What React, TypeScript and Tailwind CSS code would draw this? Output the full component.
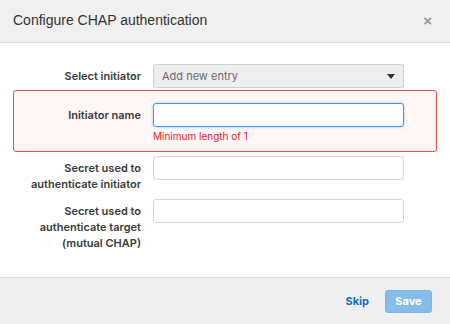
export default function App() {
  const label = 'w-[128px] shrink-0 pr-[1px] text-right text-[11px] font-semibold leading-[16px] text-[#3a3a3a]';
  const input = 'h-[24px] w-[251px] shrink-0 rounded-[3px] border border-[#d4d4d4] bg-white';

  return (
    <div className="flex h-[324px] w-[450px] flex-col bg-white font-['Inter',sans-serif]">
      <header className="flex h-[43px] shrink-0 items-center justify-between border-b border-[#dcdcdc] bg-[#f0f0f0] pl-[13px] pr-[18px]">
        <h1 className="pb-[1px] font-['Liberation_Sans',Arial,sans-serif] text-[14px] text-[#333]">
          Configure CHAP authentication
        </h1>
        <span className="font-['Liberation_Sans',Arial,sans-serif] text-[15px] font-bold text-[#9a9a9a]">
          ×
        </span>
      </header>

      <main className="flex-1 px-[13px] pt-[20px]">
        <div className="flex items-center gap-[11px] border border-transparent">
          <div className={label}>Select initiator</div>
          <div className="flex h-[24px] w-[251px] shrink-0 items-center justify-between rounded-[3px] border border-[#d2d2d2] bg-[#eeeeee] pl-[8px] pr-[8px]">
            <span className="text-[11px] text-[#6b6b6b]">Add new entry</span>
            <svg width="8" height="5" viewBox="0 0 8 5">
              <path d="M0 0h8L4 5z" fill="#333" />
            </svg>
          </div>
        </div>

        <div className="mt-[1px] flex items-start gap-[11px] rounded-[3px] border border-[#f04b4b] bg-[#fff6f6] pb-[8px] pt-[12px]">
          <div className={label + ' pt-[4px]'}>Initiator name</div>
          <div className="flex flex-col">
            <div className="h-[24px] w-[251px] rounded-[3px] border border-[#3f9ce6] bg-white shadow-[0_0_3px_rgba(60,150,230,0.5)]" />
            <div className="pt-[2px] text-[10px] leading-[14px] text-[#ee1c1c]">Minimum length of 1</div>
          </div>
        </div>

        <div className="mt-[3px] flex items-start gap-[11px] border border-transparent">
          <div className={label + ' pt-[4px]'}>
            Secret used to
            <br />
            authenticate initiator
          </div>
          <div className={input} />
        </div>

        <div className="mt-[5px] flex items-start gap-[11px] border border-transparent">
          <div className={label + ' pt-[4px]'}>
            Secret used to
            <br />
            authenticate target
            <br />
            (mutual CHAP)
          </div>
          <div className={input} />
        </div>
      </main>

      <footer className="flex h-[47px] shrink-0 items-center justify-end gap-[16px] border-t border-[#dcdcdc] bg-[#efefef] pr-[18px]">
        <span className="text-[11px] font-bold text-[#0b6ec4]">Skip</span>
        <button className="h-[23px] w-[47px] rounded-[3px] border border-[#7fb6e4] bg-[#87bde9] text-[11px] font-bold text-white">
          Save
        </button>
      </footer>
    </div>
  );
}
